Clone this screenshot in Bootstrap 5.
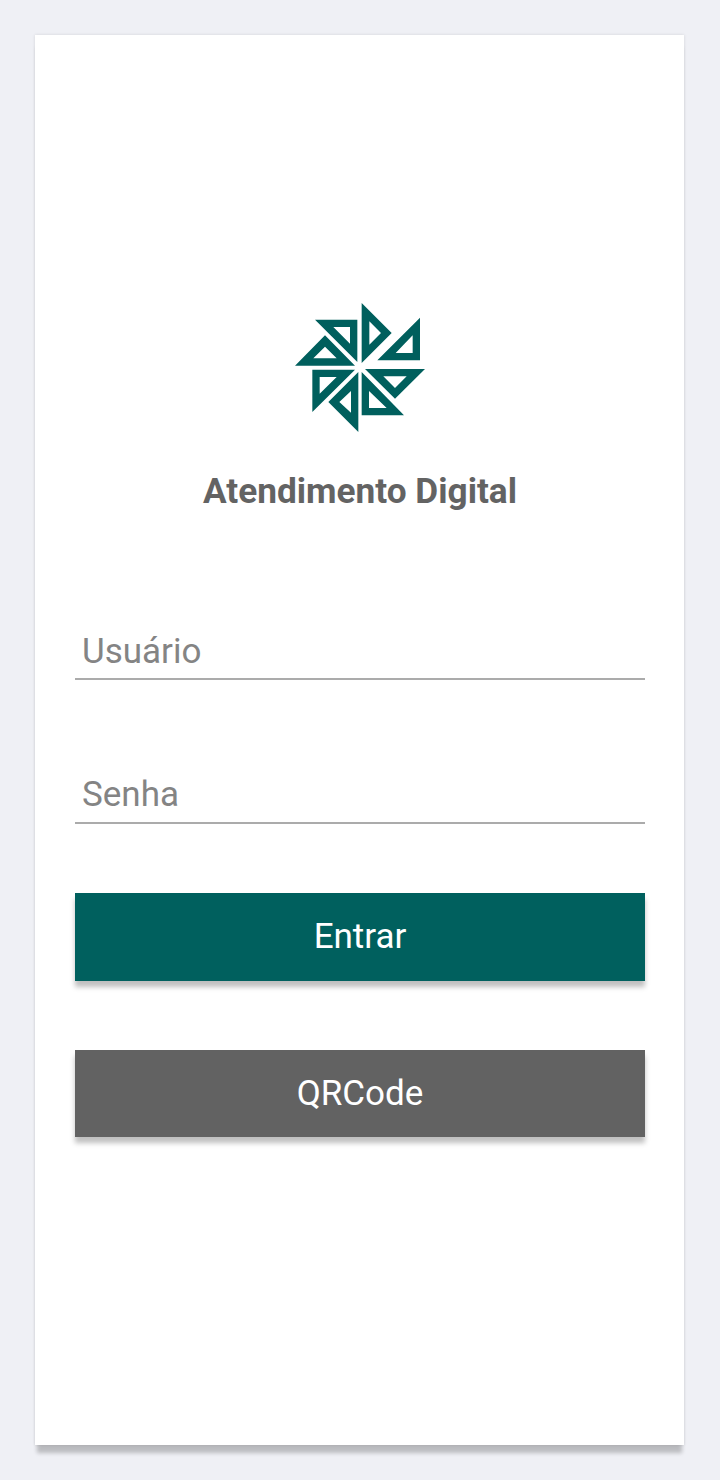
<!DOCTYPE html>
<html lang="pt-BR">
<head>
<meta charset="utf-8">
<title>Atendimento Digital</title>
<link rel="stylesheet" href="https://cdn.jsdelivr.net/npm/bootstrap@5.3.0/dist/css/bootstrap.min.css">
<style>
html, body { height: 1480px; }
body { background: #eff0f5; font-family: Roboto, "Liberation Sans", sans-serif; padding: 35px 36px 35px 35px; overflow: hidden; }
.login-sheet { height: 1410px; border: 0; border-radius: 0; background: #fff; padding: 268px 39px 0 40px; box-shadow: 0 10px 4px -2px rgba(0,0,0,.22), 0 0 3px rgba(0,0,0,.12); }
.brand-logo { width: 130px; height: 129px; display: block; filter: blur(.5px); }
.brand-title { font-size: 35.2px; font-weight: 700; color: #636363; line-height: 40px; margin: 39px 0 0; }
.login-form { margin-top: 113px; }
.field-line.form-control { height: 56px; padding: 0 7px; border: 0; border-bottom: 2px solid #ababab; border-radius: 0; font-size: 35px; line-height: 40px; color: #616161; background: transparent; box-shadow: none; }
.field-line.form-control::placeholder { color: #848484; opacity: 1; }
.field-line.field-gap { margin-top: 88px; padding-bottom: 2px; }
.action-btn.btn { display: block; width: 100%; height: 88px; padding: 0; border: 0; border-radius: 0; color: #fff; font-size: 35px; line-height: 84px; box-shadow: 0 6px 5px rgba(0,0,0,.25); }
.btn-enter.btn { background: #00605e; margin-top: 69px; }
.btn-qr.btn { background: #626262; margin-top: 69px; height: 87px; }
</style>
</head>
<body>
<main class="card login-sheet d-flex flex-column align-items-center">
  <svg class="brand-logo" viewBox="45 38 390 387" role="img" aria-label="Logo">
    <path fill="#005f5d" fill-rule="evenodd" d="M245 38L335 128L245 218ZM268 93V163L303 128Z
      M420 82V210H292ZM398 135L347 188H398Z
      M435 236L345 325L255 236ZM380 258H310L345 293Z
      M372 375H245V245ZM320 353L267 302V353Z
      M235 425L145 335L235 245ZM213 367V302L178 335Z
      M97 365V238H225ZM119 310L170 260H119Z
      M45 226L135 135L225 226ZM100 204H170L135 169Z
      M105 88H232V215ZM160 110L210 160V110Z"/>
  </svg>
  <h1 class="brand-title">Atendimento Digital</h1>
  <form class="login-form w-100">
    <input class="form-control field-line" type="text" placeholder="Usuário">
    <input class="form-control field-line field-gap" type="password" placeholder="Senha">
    <button type="button" class="btn action-btn btn-enter">Entrar</button>
    <button type="button" class="btn action-btn btn-qr">QRCode</button>
  </form>
</main>
<script src="https://cdn.jsdelivr.net/npm/bootstrap@5.3.0/dist/js/bootstrap.bundle.min.js"></script>
</body>
</html>
